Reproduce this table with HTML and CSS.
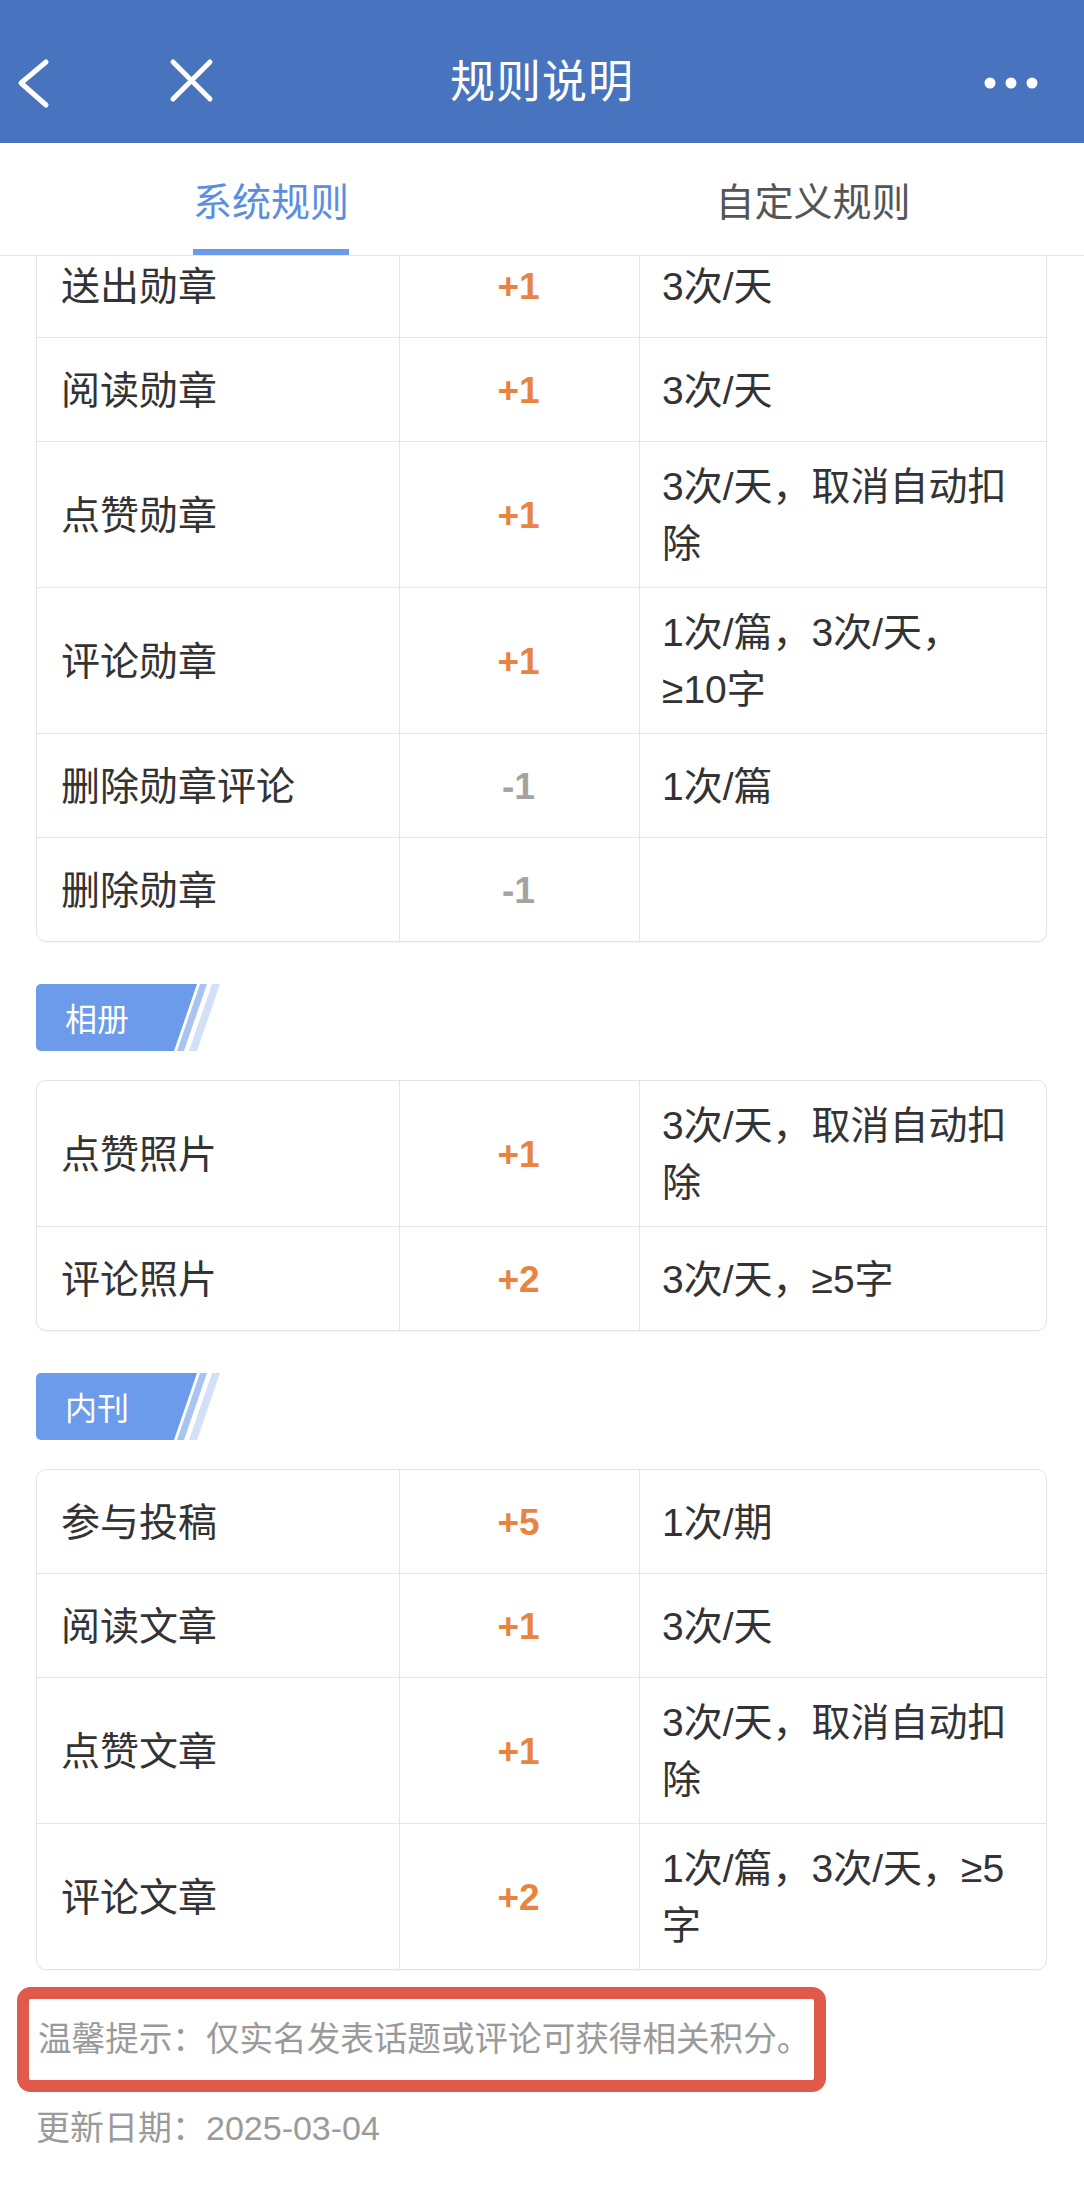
FILE: index.html
```html
<!DOCTYPE html>
<html lang="zh-CN">
<head>
<meta charset="utf-8">
<title>规则说明</title>
<link rel="stylesheet" href="styles.css">
</head>
<body>
<div class="app">
  <header class="navbar">
    <div class="nav-left">
      <svg class="ic-back" width="44" height="56" viewBox="0 0 44 56"><path d="M34 7 L9 28 L34 50" fill="none" stroke="#fff" stroke-width="5" stroke-linecap="round" stroke-linejoin="round"/></svg>
      <svg class="ic-close" width="50" height="50" viewBox="0 0 50 50"><path d="M7 4 L44 41 M44 4 L7 41" fill="none" stroke="#fff" stroke-width="5" stroke-linecap="round"/></svg>
    </div>
    <div class="nav-title">规则说明</div>
    <div class="nav-right">
      <svg class="ic-more" width="70" height="20" viewBox="0 0 70 20"><circle cx="14" cy="10" r="5.5" fill="#fff"/><circle cx="35" cy="10" r="5.5" fill="#fff"/><circle cx="56" cy="10" r="5.5" fill="#fff"/></svg>
    </div>
  </header>

  <nav class="tabs">
    <div class="tab active"><span>系统规则</span></div>
    <div class="tab"><span>自定义规则</span></div>
  </nav>

  <main class="scroll">
    <div class="scroll-inner">
      <div class="rules first">
        <div class="row"><div class="c-name">送出勋章</div><div class="c-pts plus">+1</div><div class="c-desc">3次/天</div></div>
        <div class="row"><div class="c-name">阅读勋章</div><div class="c-pts plus">+1</div><div class="c-desc">3次/天</div></div>
        <div class="row"><div class="c-name">点赞勋章</div><div class="c-pts plus">+1</div><div class="c-desc">3次/天，取消自动扣<br>除</div></div>
        <div class="row"><div class="c-name">评论勋章</div><div class="c-pts plus">+1</div><div class="c-desc">1次/篇，3次/天，<br>≥10字</div></div>
        <div class="row"><div class="c-name">删除勋章评论</div><div class="c-pts minus">-1</div><div class="c-desc">1次/篇</div></div>
        <div class="row"><div class="c-name">删除勋章</div><div class="c-pts minus">-1</div><div class="c-desc"></div></div>
      </div>

      <div class="section-tag">
        <span class="tag-label">相册</span>
        <svg class="tag-stripes" width="48" height="67" viewBox="0 0 48 67"><polygon points="26,0 33,0 10,67 3,67" fill="#a9c4f0"/><polygon points="38,0 46,0 23,67 15,67" fill="#d2e0f8"/></svg>
      </div>

      <div class="rules">
        <div class="row"><div class="c-name">点赞照片</div><div class="c-pts plus">+1</div><div class="c-desc">3次/天，取消自动扣<br>除</div></div>
        <div class="row"><div class="c-name">评论照片</div><div class="c-pts plus">+2</div><div class="c-desc">3次/天，≥5字</div></div>
      </div>

      <div class="section-tag">
        <span class="tag-label">内刊</span>
        <svg class="tag-stripes" width="48" height="67" viewBox="0 0 48 67"><polygon points="26,0 33,0 10,67 3,67" fill="#a9c4f0"/><polygon points="38,0 46,0 23,67 15,67" fill="#d2e0f8"/></svg>
      </div>

      <div class="rules">
        <div class="row"><div class="c-name">参与投稿</div><div class="c-pts plus">+5</div><div class="c-desc">1次/期</div></div>
        <div class="row"><div class="c-name">阅读文章</div><div class="c-pts plus">+1</div><div class="c-desc">3次/天</div></div>
        <div class="row"><div class="c-name">点赞文章</div><div class="c-pts plus">+1</div><div class="c-desc">3次/天，取消自动扣<br>除</div></div>
        <div class="row"><div class="c-name">评论文章</div><div class="c-pts plus">+2</div><div class="c-desc">1次/篇，3次/天，≥5<br>字</div></div>
      </div>

      <div class="tip-box">
        <p class="tip">温馨提示：仅实名发表话题或评论可获得相关积分。</p>
      </div>
      <p class="date">更新日期：2025-03-04</p>
    </div>
  </main>
</div>
</body>
</html>
```

FILE: styles.css
```css
html, body {
  margin: 0;
  padding: 0;
  background: #ffffff;
}

body {
  font-family: "Liberation Sans", "Noto Sans CJK SC", sans-serif;
  color: #333333;
}

.app {
  width: 1084px;
  height: 2210px;
  overflow: hidden;
  display: flex;
  flex-direction: column;
}

/* ---------- top navigation bar ---------- */
.navbar {
  flex: none;
  height: 143px;
  box-sizing: border-box;
  padding-top: 55px;
  background: #4773bf;
  display: grid;
  grid-template-columns: 1fr auto 1fr;
  align-items: start;
}

.nav-left {
  display: flex;
  align-items: center;
  padding-left: 12px;
  height: 56px;
}

.ic-back {
  display: block;
}

.ic-close {
  display: block;
  margin-left: 110px;
}

.nav-title {
  height: 56px;
  line-height: 56px;
  font-size: 45px;
  font-weight: 400;
  color: #ffffff;
  letter-spacing: 1px;
}

.nav-right {
  display: flex;
  justify-content: flex-end;
  align-items: center;
  height: 56px;
  padding-right: 38px;
}

.ic-more {
  display: block;
}

/* ---------- tabs ---------- */
.tabs {
  flex: none;
  height: 113px;
  box-sizing: border-box;
  display: flex;
  background: #ffffff;
  border-bottom: 1px solid #e6e6e6;
  position: relative;
  z-index: 2;
}

.tab {
  flex: 1;
  display: flex;
  justify-content: center;
}

.tab span {
  display: flex;
  align-items: center;
  box-sizing: border-box;
  height: 100%;
  padding-top: 6px;
  border-bottom: 6px solid transparent;
  font-size: 39px;
  color: #555555;
}

.tab.active span {
  color: #5b8ede;
  border-bottom-color: #6b9be8;
}

/* ---------- scroll area ---------- */
.scroll {
  flex: 1;
  overflow: hidden;
}

.scroll-inner {
  margin-top: -23px;
  padding: 0 37px 0 36px;
}

/* ---------- rule tables ---------- */
.rules {
  border: 1px solid #e3e3e3;
  border-radius: 10px;
  overflow: hidden;
  box-shadow: 0 1px 1px rgba(0, 0, 0, 0.04);
}

.row {
  display: grid;
  grid-template-columns: 363px 240px 1fr;
  border-bottom: 1px solid #e6e6e6;
}

.row:last-child {
  border-bottom: 0;
}

.row > div {
  min-height: 103px;
  box-sizing: border-box;
  padding: 16px 10px 15px 22px;
  display: flex;
  align-items: center;
  font-size: 39px;
  line-height: 57px;
  white-space: nowrap;
}

.row > .c-name {
  padding-left: 24px;
  border-right: 1px solid #e6e6e6;
  color: #333333;
}

.row > .c-pts {
  justify-content: center;
  padding-left: 0;
  padding-right: 2px;
  border-right: 1px solid #e6e6e6;
  font-weight: bold;
  font-size: 37px;
}

.c-pts.plus {
  color: #e8843f;
}

.c-pts.minus {
  color: #a3a3a3;
}

.row > .c-desc {
  color: #333333;
}

/* ---------- section tags ---------- */
.section-tag {
  display: flex;
  align-items: flex-start;
  margin: 42px 0 29px;
  height: 67px;
}

.tag-label {
  display: flex;
  align-items: center;
  box-sizing: border-box;
  width: 161px;
  height: 67px;
  padding-left: 29px;
  padding-bottom: 2px;
  background: #6b9bea;
  border-radius: 5px 0 0 5px;
  clip-path: polygon(0 0, 100% 0, calc(100% - 23px) 100%, 0 100%);
  color: #ffffff;
  font-size: 32px;
}

.tag-stripes {
  display: block;
  margin-left: -23px;
}

/* ---------- footer notes ---------- */
.tip-box {
  margin: 17px 0 0 -19px;
  width: 809px;
  height: 105px;
  box-sizing: border-box;
  border: 12px solid #df5a4a;
  border-radius: 14px;
  display: flex;
  align-items: center;
  padding-left: 9px;
}

.tip {
  margin: 0;
  font-size: 33.6px;
  line-height: 46px;
  color: #9a9a9a;
  white-space: nowrap;
}

.date {
  margin: 13px 0 0;
  font-size: 34px;
  line-height: 46px;
  color: #9a9a9a;
}
```
